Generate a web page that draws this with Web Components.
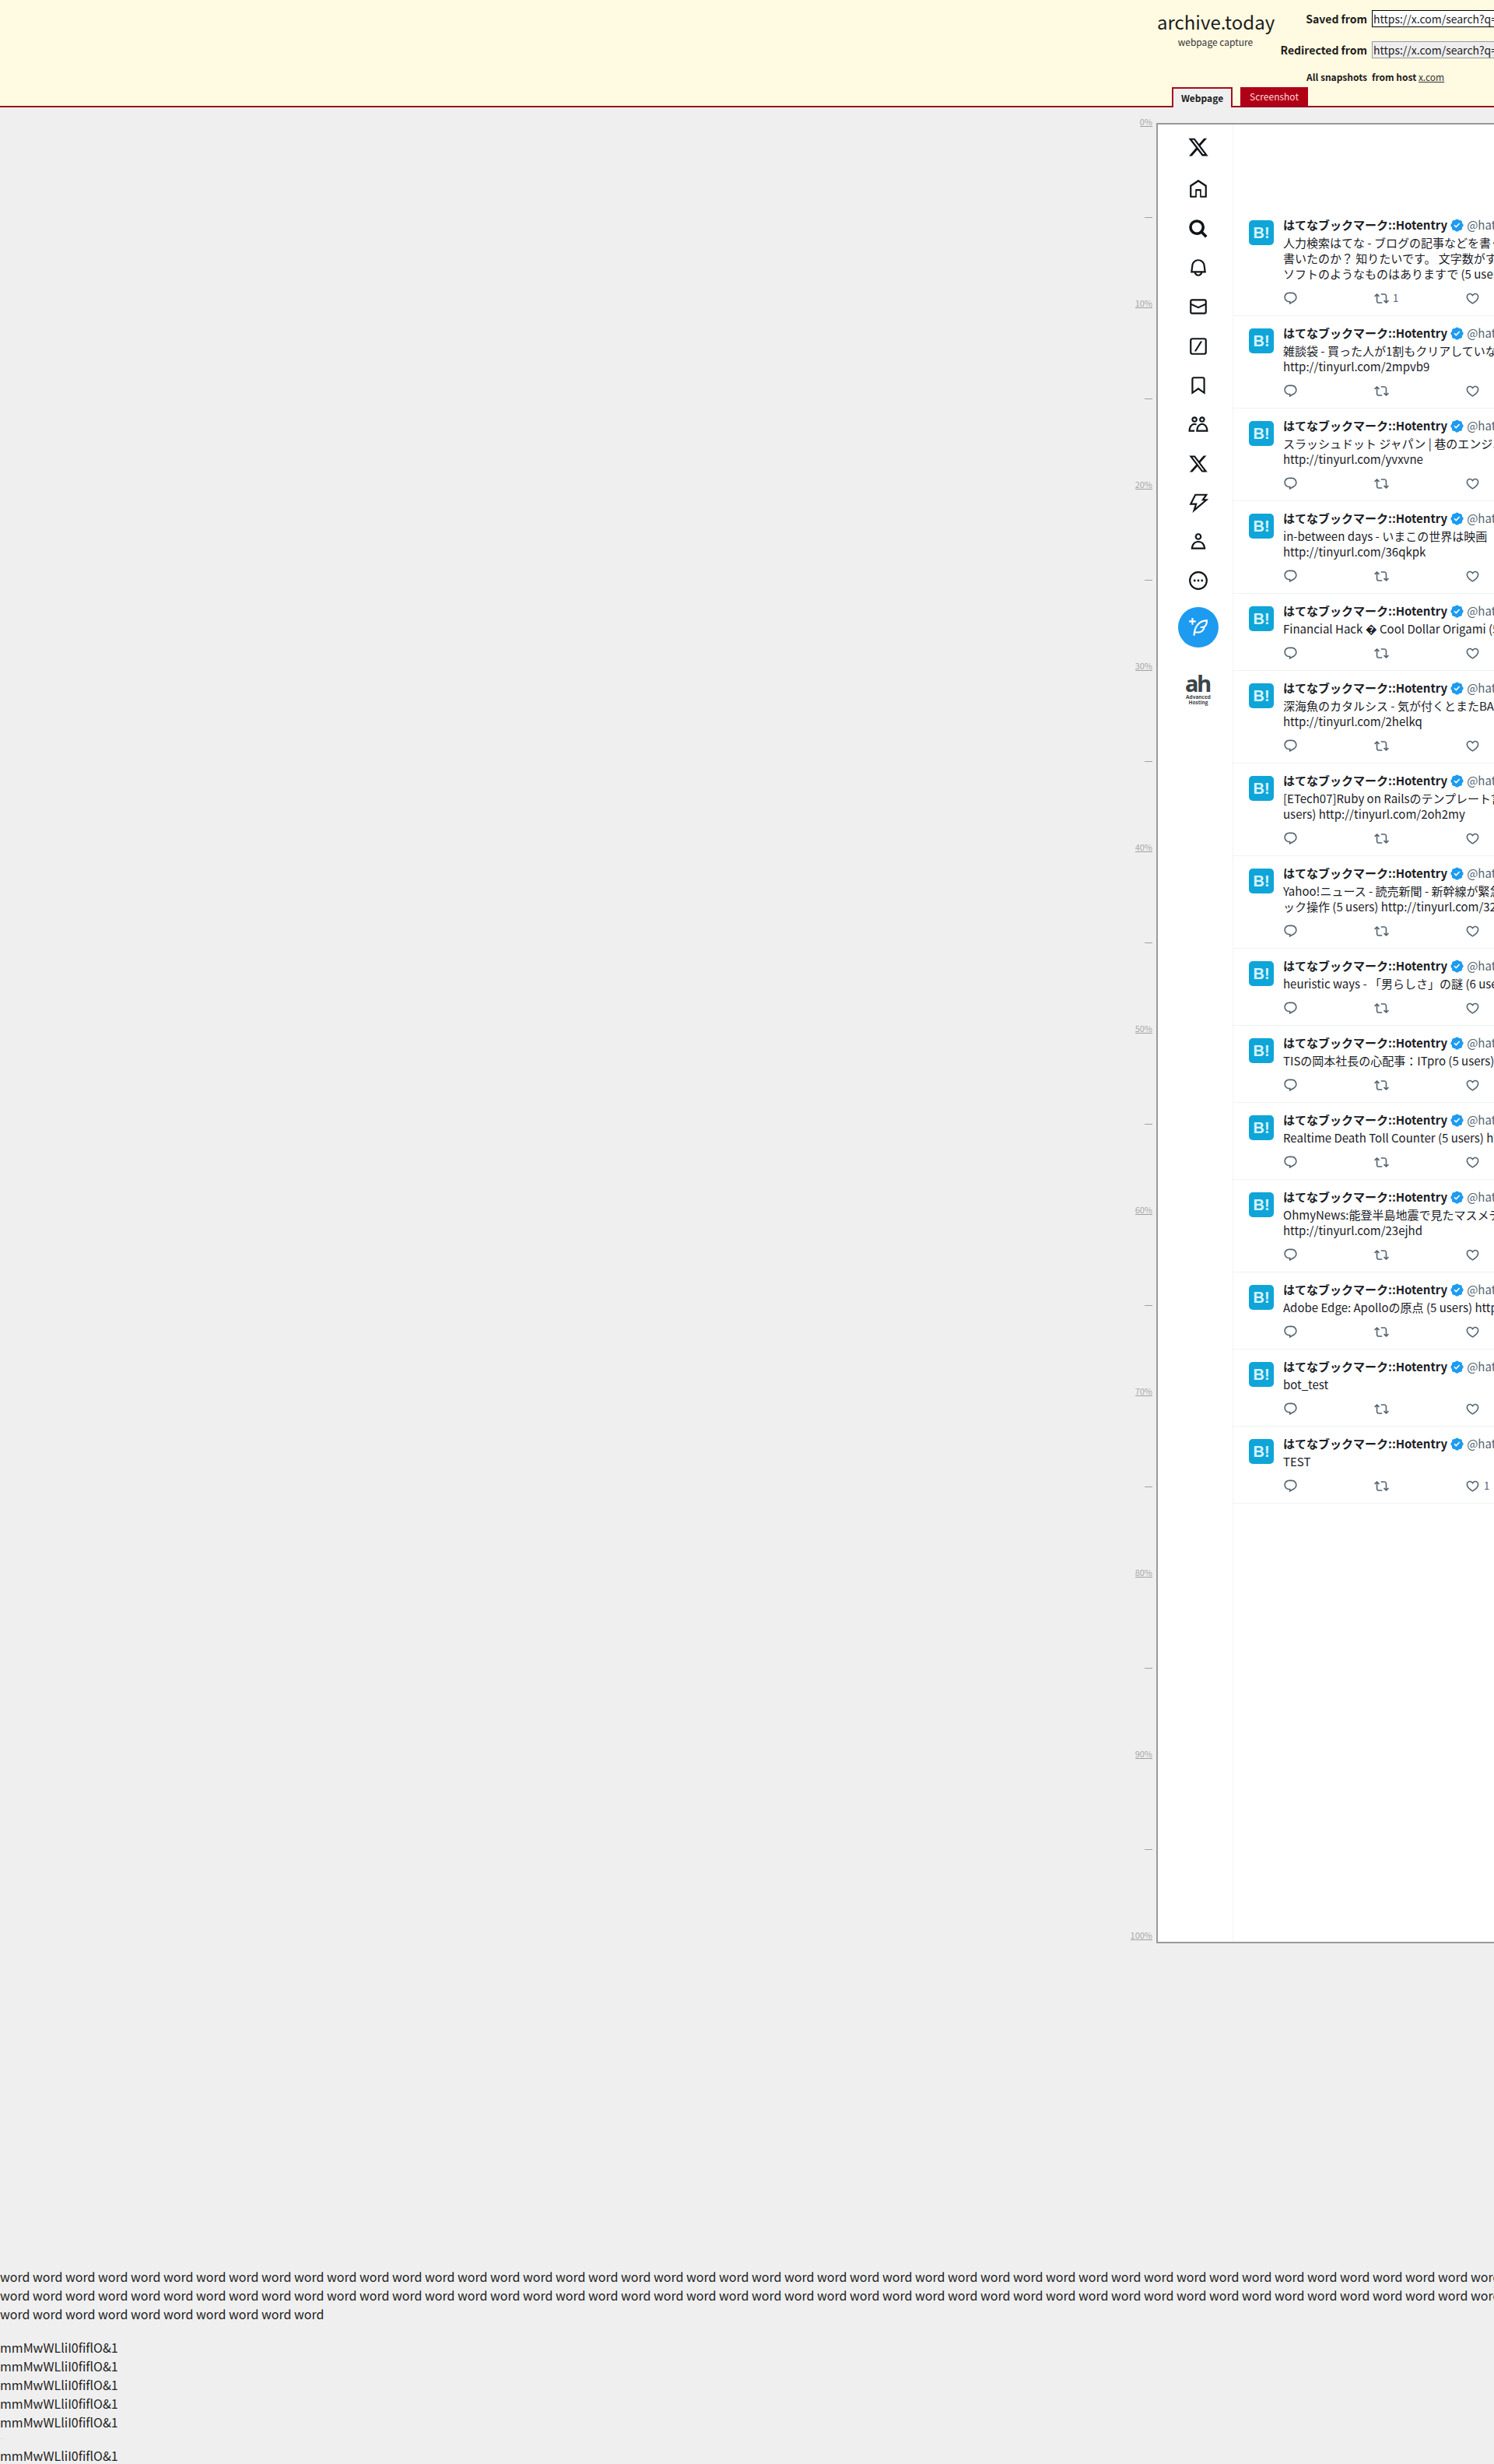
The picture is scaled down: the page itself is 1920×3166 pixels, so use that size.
<!DOCTYPE html>
<html lang="ja"><head><meta charset="utf-8"><title>archive.today</title>
<style>
html,body{margin:0;padding:0;width:1920px;height:3166px;overflow:hidden;background:#efefef;font-family:"Noto Sans CJK JP","Noto Sans",sans-serif;color:#222}
</style></head><body>
<x-header></x-header>
<x-main>
  <x-ruler slot="ruler"></x-ruler>
  <x-frame slot="frame">
    <x-sidebar slot="side"></x-sidebar>
    <x-tweet>人力検索はてな - ブログの記事などを書く<br>書いたのか？ 知りたいです。 文字数がすぐ<br>ソフトのようなものはありますで (5 users)<span slot="rt">1</span></x-tweet>
    <x-tweet>雑談袋 - 買った人が1割もクリアしていない<br>http://tinyurl.com/2mpvb9</x-tweet>
    <x-tweet>スラッシュドット ジャパン | 巷のエンジニ<br>http://tinyurl.com/yvxvne</x-tweet>
    <x-tweet>in-between days - いまこの世界は映画<br>http://tinyurl.com/36qkpk</x-tweet>
    <x-tweet>Financial Hack � Cool Dollar Origami (5 users)</x-tweet>
    <x-tweet>深海魚のカタルシス - 気が付くとまたBAR<br>http://tinyurl.com/2helkq</x-tweet>
    <x-tweet>[ETech07]Ruby on Railsのテンプレート言語<br>users) http://tinyurl.com/2oh2my</x-tweet>
    <x-tweet>Yahoo!ニュース - 読売新聞 - 新幹線が緊急<br>ック操作 (5 users) http://tinyurl.com/32</x-tweet>
    <x-tweet>heuristic ways - 「男らしさ」の謎 (6 users)</x-tweet>
    <x-tweet>TISの岡本社長の心配事：ITpro (5 users)</x-tweet>
    <x-tweet>Realtime Death Toll Counter (5 users) http</x-tweet>
    <x-tweet>OhmyNews:能登半島地震で見たマスメディア<br>http://tinyurl.com/23ejhd</x-tweet>
    <x-tweet>Adobe Edge: Apolloの原点 (5 users) http</x-tweet>
    <x-tweet>bot_test</x-tweet>
    <x-tweet>TEST<span slot="like">1</span></x-tweet>
  </x-frame>
</x-main>
<x-footer-text></x-footer-text>
<script>
const P={
x:'<path d="M18.244 2.25h3.308l-7.227 8.26 8.502 11.24H16.17l-5.214-6.817L4.99 21.75H1.68l7.73-8.835L1.254 2.25H8.08l4.713 6.231zm-1.161 17.52h1.833L7.084 4.126H5.117z"/>',
home:'<path d="M21.591 7.146L12.52 1.157c-.316-.21-.724-.21-1.04 0l-9.071 5.99c-.26.173-.409.456-.409.757v13.183c0 .502.418.913.929.913H9.14c.51 0 .929-.41.929-.913v-7.075h3.909v7.075c0 .502.417.913.928.913h6.165c.511 0 .929-.41.929-.913V7.904c0-.301-.158-.584-.408-.758zM20 20l-4.5.01.011-7.097c0-.502-.418-.913-.928-.913H9.44c-.511 0-.929.41-.929.913L8.5 20H4V8.773l8.011-5.342L20 8.764z"/>',
search:'<path stroke="currentColor" stroke-width="1.3" d="M10.25 3.75c-3.59 0-6.5 2.91-6.5 6.5s2.91 6.5 6.5 6.5c1.795 0 3.419-.726 4.596-1.904 1.178-1.177 1.904-2.801 1.904-4.596 0-3.59-2.91-6.5-6.5-6.5zm-8.5 6.5c0-4.694 3.806-8.5 8.5-8.5s8.5 3.806 8.5 8.5c0 1.986-.682 3.815-1.824 5.262l4.781 4.781-1.414 1.414-4.781-4.781c-1.447 1.142-3.276 1.824-5.262 1.824-4.694 0-8.5-3.806-8.5-8.5z"/>',
bell:'<path d="M19.993 9.042C19.48 5.017 16.054 2 11.996 2s-7.49 3.021-7.999 7.051L2.866 18H7.1c.463 2.282 2.481 4 4.9 4s4.437-1.718 4.9-4h4.236l-1.143-8.958zM12 20c-1.306 0-2.417-.835-2.829-2h5.658c-.412 1.165-1.523 2-2.829 2zm-6.866-4l.847-6.698C6.364 6.272 8.941 4 11.996 4s5.627 2.268 6.013 5.295L18.864 16H5.134z"/>',
mail:'<path d="M1.998 5.5c0-1.381 1.119-2.5 2.5-2.5h15c1.381 0 2.5 1.119 2.5 2.5v13c0 1.381-1.119 2.5-2.5 2.5h-15c-1.381 0-2.5-1.119-2.5-2.5v-13zm2.5-.5c-.276 0-.5.224-.5.5v2.764l8 3.638 8-3.636V5.5c0-.276-.224-.5-.5-.5h-15zm15.5 5.463l-8 3.636-8-3.638V18.5c0 .276.224.5.5.5h15c.276 0 .5-.224.5-.5v-8.037z"/>',
grok:'<path fill-rule="evenodd" d="M2 5a3 3 0 0 1 3-3h14a3 3 0 0 1 3 3v14a3 3 0 0 1-3 3H5a3 3 0 0 1-3-3V5zm3-1a1 1 0 0 0-1 1v14a1 1 0 0 0 1 1h14a1 1 0 0 0 1-1V5a1 1 0 0 0-1-1H5z"/><path d="M14.6 6h2.2L9.4 18H7.2z"/>',
mark:'<path d="M4 4.5C4 3.12 5.119 2 6.5 2h11C18.881 2 20 3.12 20 4.5v18.44l-8-5.71-8 5.71V4.5zM6.5 4c-.276 0-.5.22-.5.5v14.56l6-4.29 6 4.29V4.5c0-.28-.224-.5-.5-.5h-11z"/>',
comm:'<path d="M7.501 19.917L7.471 21H.472l.029-1.027c.184-6.618 3.736-8.977 7-8.977.963 0 1.95.212 2.87.672-.444.478-.851 1.03-1.212 1.656-.507-.204-1.054-.329-1.658-.329-2.767 0-4.57 2.223-4.938 6.004H7.56c-.023.302-.05.599-.059.917zm15.998.056L23.528 21H9.472l.029-1.027c.184-6.618 3.736-8.977 7-8.977s6.816 2.358 7 8.977zM21.437 19c-.367-3.781-2.17-6.004-4.938-6.004s-4.57 2.223-4.938 6.004h9.875zM16.5 10c-1.933 0-3.5-1.57-3.5-3.5S14.567 3 16.5 3 20 4.57 20 6.5 18.433 10 16.5 10zm0-5c-.827 0-1.5.673-1.5 1.5S15.673 8 16.5 8 18 7.327 18 6.5 17.327 5 16.5 5zM7.5 3C9.433 3 11 4.57 11 6.5S9.433 10 7.5 10 4 8.43 4 6.5 5.567 3 7.5 3zm0 2C6.673 5 6 5.673 6 6.5S6.673 8 7.5 8 9 7.327 9 6.5 8.327 5 7.5 5z"/>',
bolt:'<path fill="none" stroke="currentColor" stroke-width="2" stroke-linejoin="miter" d="M8.5 2.5h13l-4 6h4.2L7 21l2.4-7.5H3z"/>',
user:'<path d="M5.651 19h12.698c-.337-1.8-1.023-3.21-1.945-4.19C15.318 13.65 13.838 13 12 13s-3.317.65-4.404 1.81c-.922.98-1.608 2.39-1.945 4.19zm.486-5.56C7.627 11.85 9.648 11 12 11s4.373.85 5.863 2.44c1.477 1.58 2.366 3.8 2.632 6.46l.11 1.1H3.395l.11-1.1c.266-2.66 1.155-4.88 2.632-6.46zM12 4c-1.105 0-2 .9-2 2s.895 2 2 2 2-.9 2-2-.895-2-2-2zM8 6c0-2.21 1.791-4 4-4s4 1.79 4 4-1.791 4-4 4-4-1.79-4-4z"/>',
more:'<circle cx="12" cy="12" r="10" fill="none" stroke="currentColor" stroke-width="2"/><circle cx="7.6" cy="12" r="1.3"/><circle cx="12" cy="12" r="1.3"/><circle cx="16.4" cy="12" r="1.3"/>',
quill:'<path d="M23 3c-6.62-.1-10.38 2.421-13.05 6.03C7.29 12.61 6 17.331 6 22h2c0-1.007.07-2.012.19-3H12c4.1 0 7.48-3.082 7.94-7.054C22.79 10.147 23.17 6.359 23 3zm-7 8h-1.5v2H16c.63-.016 1.2-.08 1.72-.188C16.95 15.24 14.68 17 12 17H8.55c.57-2.512 1.57-4.851 3-6.78 2.16-2.912 5.29-4.911 9.45-5.187C20.95 8.079 19.9 11 16 11zM4 9V6H1V4h3V1h2v3h3v2H6v3H4z"/>',
reply:'<path d="M1.751 10c0-4.42 3.584-8 8.005-8h4.366c4.49 0 8.129 3.64 8.129 8.13 0 2.96-1.607 5.68-4.196 7.11l-8.054 4.46v-3.69h-.067c-4.49.1-8.183-3.51-8.183-8.01zm8.005-6c-3.317 0-6.005 2.69-6.005 6 0 3.37 2.77 6.08 6.138 6.01l.351-.01h1.761v2.3l5.087-2.81c1.951-1.08 3.163-3.13 3.163-5.36 0-3.39-2.744-6.13-6.129-6.13H9.756z"/>',
rt:'<path d="M4.5 3.88l4.432 4.14-1.364 1.46L5.5 7.55V16c0 1.1.896 2 2 2H13v2H7.5c-2.209 0-4-1.79-4-4V7.55L1.432 9.48.068 8.02 4.5 3.88zM16.5 6H11V4h5.5c2.209 0 4 1.79 4 4v8.45l2.068-1.93 1.364 1.46-4.432 4.14-4.432-4.14 1.364-1.46 2.068 1.93V8c0-1.1-.896-2-2-2z"/>',
like:'<path d="M16.697 5.5c-1.222-.06-2.679.51-3.89 2.16l-.805 1.09-.806-1.09C9.984 6.01 8.526 5.44 7.304 5.5c-1.243.07-2.349.78-2.91 1.91-.552 1.12-.633 2.78.479 4.82 1.074 1.97 3.257 4.27 7.129 6.61 3.87-2.34 6.052-4.64 7.126-6.61 1.111-2.04 1.03-3.7.477-4.82-.561-1.13-1.666-1.84-2.908-1.91zm4.187 7.69c-1.351 2.48-4.001 5.12-8.379 7.67l-.503.3-.504-.3c-4.379-2.55-7.029-5.19-8.382-7.67-1.36-2.5-1.41-4.86-.514-6.67.887-1.79 2.647-2.91 4.601-3.01 1.651-.09 3.368.56 4.798 2.01 1.429-1.45 3.146-2.1 4.796-2.01 1.954.1 3.714 1.22 4.601 3.01.896 1.81.846 4.17-.514 6.67z"/>',
badge:'<path d="M22.25 12c0-1.43-.88-2.67-2.19-3.34.46-1.39.2-2.9-.81-3.91s-2.52-1.27-3.91-.81c-.66-1.31-1.91-2.19-3.34-2.19s-2.67.88-3.33 2.19c-1.4-.46-2.91-.2-3.92.81s-1.26 2.52-.8 3.91c-1.31.67-2.2 1.91-2.2 3.34s.89 2.67 2.2 3.34c-.46 1.39-.21 2.9.8 3.91s2.52 1.26 3.91.81c.67 1.31 1.91 2.19 3.34 2.19s2.68-.88 3.34-2.19c1.39.45 2.9.2 3.91-.81s1.27-2.52.81-3.91c1.31-.67 2.19-1.91 2.19-3.34zm-11.71 4.2L6.8 12.46l1.41-1.42 2.26 2.26 4.8-5.23 1.47 1.36-6.2 6.77z"/>'
};
function def(name,html){customElements.define(name,class extends HTMLElement{constructor(){super();this.attachShadow({mode:'open'}).innerHTML=typeof html==='function'?html(this):html;}})}

class XIcon extends HTMLElement{
  connectedCallback(){
    const s=this.getAttribute('size')||26;
    this.shadowRoot||this.attachShadow({mode:'open'});
    this.shadowRoot.innerHTML=`<style>:host{display:inline-flex;line-height:0;width:${s}px;height:${s}px;flex:none}svg{width:100%;height:100%;fill:currentColor}</style><svg viewBox="0 0 24 24">${P[this.getAttribute('name')]}</svg>`;
  }
}
customElements.define('x-icon',XIcon);

def('x-header',`<style>
:host{display:block;height:136px;background:#fffae1;border-bottom:2px solid #9b0e20;color:#1c1c1c}
.top{display:flex;height:112px;padding-left:1487px;box-sizing:border-box}
.logo{width:150px;text-align:center;padding-top:9px}
.logo b{display:block;font-weight:400;font-size:24px;line-height:38px;white-space:nowrap}
.logo span{display:block;font-size:12px;line-height:18px;margin-top:-2px;white-space:nowrap;color:#333}
.form{display:grid;grid-template-columns:120px 1fr;column-gap:6px;grid-template-rows:22px 22px 20px;row-gap:18px;padding-top:13px;font-size:14px}
.l{font-weight:700;text-align:right;line-height:22px;white-space:nowrap}
.i{width:420px;height:22px;box-sizing:border-box;border:1px solid #000;background:#fff;font-size:14px;line-height:20px;padding-left:1px;white-space:nowrap;overflow:hidden}
.i.g{border-color:#999;background:#eee}
.s{font-size:12px;font-weight:700;line-height:20px;white-space:nowrap;margin-top:-4px}
.s.l{line-height:20px}
.s a{font-weight:400;color:#333;text-decoration:underline}
.tabs{display:flex;gap:10px;padding-left:1506px;height:26px}
.t{box-sizing:border-box;height:26px;font-size:12px;line-height:24px;text-align:center}
.a{width:78px;border:2px solid #a50d1f;border-bottom:0;background:#efefef;font-weight:700}
.b{width:87px;height:24px;background:#b00016;color:#ffd9d9}
</style>
<div class="top"><div class="logo"><b>archive.today</b><span>webpage capture</span></div>
<div class="form"><div class="l">Saved from</div><div class="i">https://x.com/search?q=hatebu</div>
<div class="l">Redirected from</div><div class="i g">https://x.com/search?q=hatebu</div>
<div class="l s">All snapshots</div><div class="s">from host <a>x.com</a></div></div></div>
<div class="tabs"><div class="t a">Webpage</div><div class="t b">Screenshot</div></div>`);

def('x-main',`<style>:host{display:flex;align-items:flex-start;gap:5px;padding:12px 0 0 1400px;width:1000px}
::slotted([slot=frame]){margin-top:8px}</style><slot name="ruler"></slot><slot name="frame"></slot>`);

def('x-ruler',()=>{let c='';for(let i=0;i<=20;i++){c+=`<div class="c"><span class="${i%2?'d':''}">${i%2?'':(i*5)+'%'}</span></div>`}
return `<style>:host{display:grid;grid-auto-rows:116.5px;width:81px;font-size:11px;color:#a8a8a8}
.c{display:flex;justify-content:flex-end;align-items:flex-start}
span{display:block;height:12px;line-height:12px;border-bottom:1px solid #a0a0a0;white-space:nowrap}
.d{width:10px}</style>${c}`});

def('x-frame',`<style>:host{display:flex;box-sizing:content-box;width:800px;height:2335px;border:2px solid #999;background:#fff;overflow:hidden}
.f{flex:1;padding-top:107px;min-width:0}</style><slot name="side"></slot><div class="f"><slot></slot></div>`);

def('x-sidebar',`<style>:host{display:flex;flex-direction:column;align-items:center;box-sizing:border-box;width:97px;padding-left:8px;padding-top:15px;border-right:1px solid #eff3f4;color:#0f1419;flex:none}
.n{height:50.3px;display:flex;align-items:center;justify-content:center}
.n.x{height:58.3px;margin-top:-15px}
.n.x x-icon{margin-top:-1px}
.c{width:52px;height:52px;border-radius:50%;background:#1d9bf0;color:#fff;display:flex;align-items:center;justify-content:center;margin-top:8px}
.ah{margin-top:34px;display:flex;flex-direction:column;align-items:center;color:#3c4448;font-family:"Open Sans",sans-serif;font-weight:700}
.ah b{font-size:29px;line-height:23px;letter-spacing:-2px;margin-left:-2px;font-family:"Noto Sans",sans-serif;font-weight:700;margin-bottom:3px}
.ah span{font-size:6.5px;line-height:7px;white-space:nowrap}
</style>
<div class="n x"><x-icon name="x" size="28"></x-icon></div>
<div class="n"><x-icon name="home"></x-icon></div>
<div class="n"><x-icon name="search"></x-icon></div>
<div class="n"><x-icon name="bell"></x-icon></div>
<div class="n"><x-icon name="mail"></x-icon></div>
<div class="n"><x-icon name="grok"></x-icon></div>
<div class="n"><x-icon name="mark"></x-icon></div>
<div class="n"><x-icon name="comm"></x-icon></div>
<div class="n"><x-icon name="x"></x-icon></div>
<div class="n"><x-icon name="bolt"></x-icon></div>
<div class="n"><x-icon name="user"></x-icon></div>
<div class="n"><x-icon name="more"></x-icon></div>
<div class="c"><x-icon name="quill" size="26"></x-icon></div>
<div class="ah"><b>ah</b><span>Advanced</span><span>Hosting</span></div>`);

def('x-tweet',`<style>:host{display:flex;gap:12px;padding:12px 0 13px 20px;border-bottom:1px solid #eff3f4;color:#1a2026;font-size:15px;white-space:nowrap}
.av{flex:none;width:32px;height:32px;margin-top:4px;border-radius:5px;background:#0fa5d8;color:#d9f4fd;font:700 20px/32px "Liberation Sans",sans-serif;text-align:center}
.b{min-width:0}
.h{display:flex;align-items:center;height:20px;line-height:20px;margin-bottom:3px}
.h b{font-weight:700}
.h x-icon{color:#1d9bf0;margin:0 3px 0 3px}
.h span{color:#536471}
.t{line-height:20px}
.a{display:flex;margin-top:12px;height:18px;color:#536471;font-size:13px}
.k{width:117px;display:flex;align-items:center;flex:none}
.k span{padding-left:5px;line-height:18px}
</style>
<div class="av">B!</div><div class="b"><div class="h"><b>はてなブックマーク::Hotentry</b><x-icon name="badge" size="19"></x-icon><span>@hatebu</span></div>
<div class="t"><slot></slot></div>
<div class="a"><div class="k"><x-icon name="reply" size="19"></x-icon></div><div class="k"><x-icon name="rt" size="19"></x-icon><span><slot name="rt"></slot></span></div><div class="k"><x-icon name="like" size="19"></x-icon><span><slot name="like"></slot></span></div></div></div>`);

def('x-footer-text',()=>{const w=Array(46).fill('word').join(' ');const m='mmMwWLliI0fiflO&amp;1';
return `<style>:host{display:block;margin-top:316.5px;font-size:16px;line-height:24px;color:#222;white-space:nowrap;width:1920px;overflow:hidden}
.p{margin-bottom:19px}.d{height:19px;font-size:3px;line-height:19px;color:#888}</style>
<div class="p">${w}<br>${w}<br>${Array(10).fill('word').join(' ')}</div>
<div>${m}<br>${m}<br>${m}<br>${m}<br>${m}</div><div class="d">------</div><div>${m}</div>`});
</script>
</body></html>
